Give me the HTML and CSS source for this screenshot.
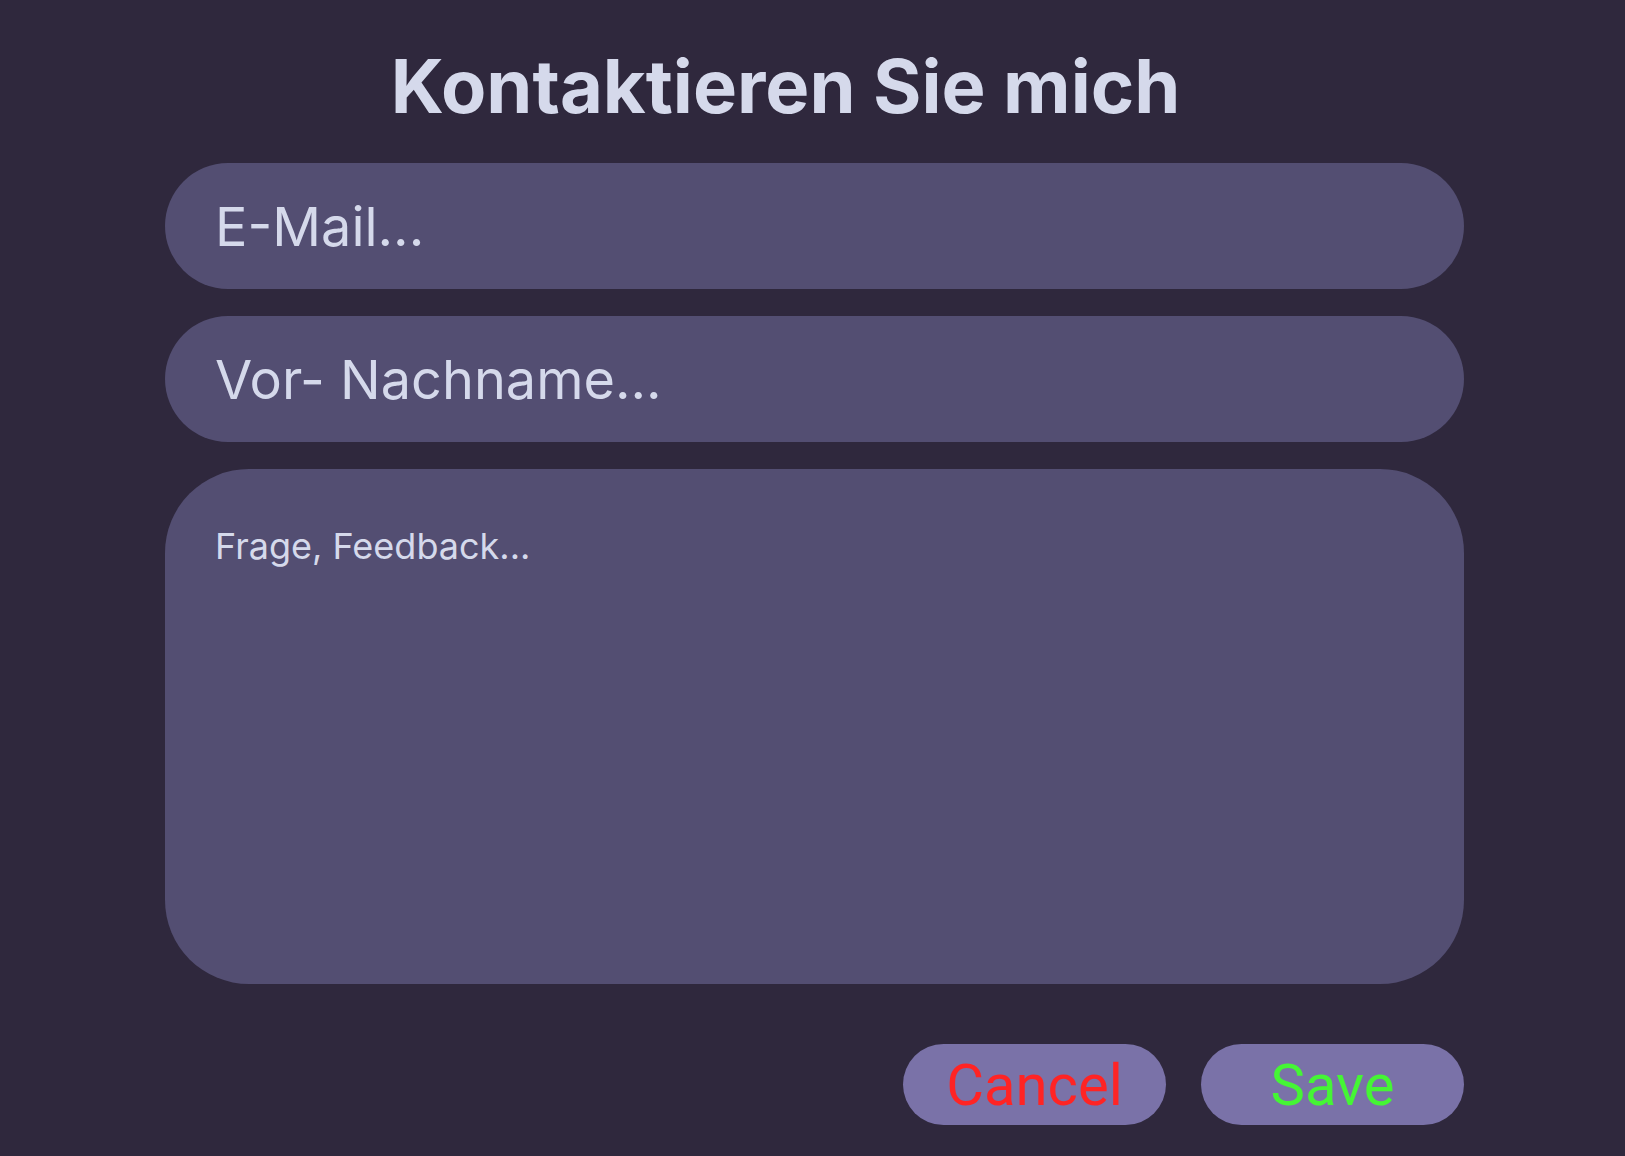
FILE: index.html
```html
<!DOCTYPE html>
<html lang="de">
<head>
<meta charset="utf-8">
<title>Kontakt</title>
<link rel="stylesheet" href="styles.css">
</head>
<body>
<main class="contact">
  <h1 class="contact-title">Kontaktieren Sie mich</h1>
  <form class="contact-form">
    <input class="field field-line" type="email" placeholder="E-Mail...">
    <input class="field field-line" type="text" placeholder="Vor- Nachname...">
    <textarea class="field field-area" placeholder="Frage, Feedback..."></textarea>
    <div class="actions">
      <button type="button" class="btn btn-cancel">Cancel</button>
      <button type="submit" class="btn btn-save">Save</button>
    </div>
  </form>
</main>
</body>
</html>
```
FILE: styles.css
```css
html, body {
  margin: 0;
  padding: 0;
  background: #2f283d;
  height: 100%;
}
body {
  font-family: Inter, "Noto Sans", sans-serif;
  color: #d5d9eb;
}
.contact {
  width: 1299px;
  margin-left: 165px;
  display: flex;
  flex-direction: column;
  padding-top: 43px;
}
.contact-title {
  margin: 0 0 33px 0;
  font-size: 74px;
  line-height: 87px;
  font-weight: 700;
  text-align: center;
  color: #d5d9eb;
  padding-right: 58px;
}
.contact-form {
  display: flex;
  flex-direction: column;
  gap: 27px;
}
.field {
  box-sizing: border-box;
  width: 100%;
  border: none;
  outline: none;
  background: #534e72;
  color: #d5d9eb;
  font-family: Inter, "Noto Sans", sans-serif;
  margin: 0;
}
.field::placeholder {
  color: #d5d9eb;
  opacity: 1;
}
.field-line {
  height: 126px;
  border-radius: 63px;
  padding: 0 50px;
  font-size: 54px;
}
.field-area {
  height: 515px;
  border-radius: 84px;
  padding: 55px 50px;
  font-size: 36px;
  resize: none;
}
.actions {
  display: flex;
  justify-content: flex-end;
  gap: 35px;
  margin-top: 33px;
}
.btn {
  width: 263px;
  height: 81px;
  border: none;
  border-radius: 41px;
  background: #7a72a8;
  font-family: Roboto, "Liberation Sans", sans-serif;
  font-size: 58px;
  padding: 0;
  cursor: pointer;
}
.btn-cancel { color: #ff2424; }
.btn-save { color: #45f535; }
```
